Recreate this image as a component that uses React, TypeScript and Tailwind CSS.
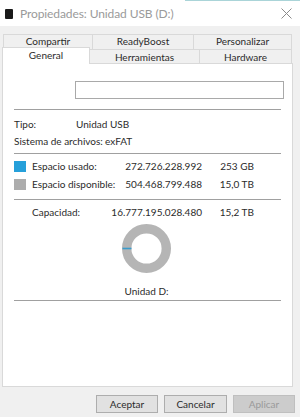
import React from "react";

const font = { fontFamily: "Lato, 'Noto Sans', sans-serif" };

function Sep() {
  return <div className="mx-[11px] h-px bg-[#a0a0a0]" />;
}

export default function App() {
  return (
    <div
      className="w-[300px] h-[417px] bg-[#f0f0f0] flex flex-col overflow-hidden text-[#2b2b2b] text-[10px] whitespace-nowrap"
      style={font}
    >
      {/* title bar */}
      <div className="h-[26px] bg-white flex flex-col">
        <div className="h-px flex">
          <div className="ml-[185px] flex-1 bg-[#aad4d8]" />
        </div>
        <div className="flex-1 flex items-center pl-[5px] pr-[8px]">
          <div className="w-[8px] h-[10px] bg-[#1a1a1a] rounded-[1px]" />
          <div className="ml-[7px] text-[12px] text-[#9a9a9a] tracking-[-0.1px]">
            Propiedades: Unidad USB (D:)
          </div>
          <div className="ml-auto">
            <svg width="11" height="11" viewBox="0 0 11 11">
              <path d="M0.5 0.5 L10.5 10.5 M10.5 0.5 L0.5 10.5" stroke="#8a8a8a" strokeWidth="1" />
            </svg>
          </div>
        </div>
      </div>

      {/* tabs */}
      <div className="mt-[8px] flex flex-col">
        <div className="flex h-[15px] ml-[3px]">
          {[
            ["Compartir", "w-[89px]"],
            ["ReadyBoost", "w-[101px]"],
            ["Personalizar", "w-[99px] border-r"],
          ].map(([t, w]) => (
            <div
              key={t}
              className={`${w} h-full border-t border-l border-[#d9d9d9] bg-[#f0f0f0] flex items-center justify-center pb-[2px]`}
            >
              {t}
            </div>
          ))}
        </div>
        <div className="flex h-[14px] ml-[2px] items-start">
          <div className="relative z-10 w-[88px] h-[17px] -mt-[2px] bg-white border-t border-l border-r border-[#d9d9d9] flex items-center justify-center pb-[2px]">
            General
          </div>
          <div className="w-[109px] h-full border-t border-[#d9d9d9] bg-[#f0f0f0] flex items-center justify-center pt-[1px]">
            Herramientas
          </div>
          <div className="w-[93px] h-full border-t border-l border-r border-[#d9d9d9] bg-[#f0f0f0] flex items-center justify-center pt-[1px]">
            Hardware
          </div>
        </div>
      </div>

      {/* panel */}
      <div className="ml-[2px] w-[291px] h-[324px] bg-white border border-[#d9d9d9] flex flex-col">
        <div className="mt-[17px] ml-[72px] w-[209px] h-[18px] border border-[#a9a9a9]" />
        <div className="mt-[10px]">
          <Sep />
        </div>
        <div className="mt-[6px] h-[17px] flex items-center pl-[11px]">
          <div className="w-[62px]">Tipo:</div>
          <div>Unidad USB</div>
        </div>
        <div className="h-[17px] flex items-center pl-[11px]">
          <div className="w-[91px]">Sistema de archivos:</div>
          <div>exFAT</div>
        </div>
        <div className="mt-[3px]">
          <Sep />
        </div>
        <div className="mt-[3px] h-[18px] flex items-center pl-[11px]">
          <div className="w-[12px] h-[11px] bg-[#26a0da]" />
          <div className="ml-[6px] w-[82px]">Espacio usado:</div>
          <div className="w-[88px] text-right">272.726.228.992</div>
          <div className="w-[52px] text-right">253 GB</div>
        </div>
        <div className="h-[18px] flex items-center pl-[11px]">
          <div className="w-[12px] h-[11px] bg-[#adadad]" />
          <div className="ml-[6px] w-[82px]">Espacio disponible:</div>
          <div className="w-[88px] text-right">504.468.799.488</div>
          <div className="w-[52px] text-right">15,0 TB</div>
        </div>
        <div className="mt-[6px]">
          <Sep />
        </div>
        <div className="mt-[4px] h-[16px] flex items-center pl-[29px]">
          <div className="w-[59px]">Capacidad:</div>
          <div className="w-[111px] text-right">16.777.195.028.480</div>
          <div className="w-[52px] text-right">15,2 TB</div>
        </div>
        <div className="mt-[4px] flex justify-center pr-[2px]">
          <svg width="49" height="49" viewBox="0 0 49 49">
            <circle cx="24.5" cy="24.5" r="19.8" fill="none" stroke="#b5b5b5" strokeWidth="9.4" />
            <path d="M0.5 24.5 L9.5 24.5" stroke="#3a9ccc" strokeWidth="1.6" />
          </svg>
        </div>
        <div className="mt-[10px] h-[16px] flex items-center justify-center pr-[2px]">
          Unidad D:
        </div>
        <div className="mt-[1px]">
          <Sep />
        </div>
      </div>

      {/* buttons */}
      <div className="mt-[8px] flex justify-end pr-[5px] gap-[6px]">
        <div className="w-[62px] h-[18px] bg-[#e1e1e1] border border-[#adadad] flex items-center justify-center">
          Aceptar
        </div>
        <div className="w-[63px] h-[18px] bg-[#e1e1e1] border border-[#adadad] flex items-center justify-center">
          Cancelar
        </div>
        <div className="w-[62px] h-[18px] bg-[#cccccc] border border-[#bfbfbf] text-[#9a9a9a] flex items-center justify-center">
          Aplicar
        </div>
      </div>
    </div>
  );
}
